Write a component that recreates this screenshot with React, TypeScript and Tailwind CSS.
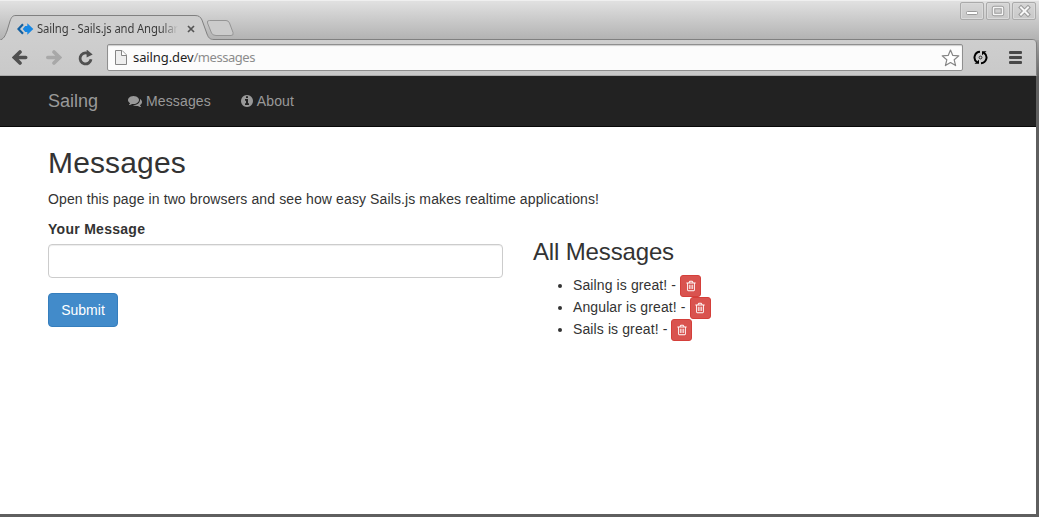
import React from "react";

type Glyph = { d: string; className?: string; viewBox?: string };

const COMMENTS =
  "M1408 768q0 139-94 257t-256.5 186.5-353.5 68.5q-86 0-176-16-124 88-278 128-36 9-86 16h-3q-11 0-20.5-8t-11.5-21q-1-3-1-6.5t.5-6.5 2-6l2.5-5 3.5-5.5 4-5 4.5-5 4-4.5q5-6 23-25t26-29.5 22.5-29 25-38.5 20.5-44q-124-72-195-177t-71-224q0-139 94-257t256.5-186.5 353.5-68.5 353.5 68.5 256.5 186.5 94 257zm384 256q0 120-71 224.5t-195 176.5q10 24 20.5 44t25 38.5 22.5 29 26 29.5 23 25q1 1 4 4.5t4.5 5 4 5 3.5 5.5l2.5 5 2 6 .5 6.5-1 6.5q-3 14-13 22t-22 7q-50-7-86-16-154-40-278-128-90 16-176 16-271 0-472-132 58 4 88 4 161 0 309-45t264-129q125-92 192-212t67-254q0-77-23-152 129 71 204 178t75 230z";
const INFO =
  "M1152 1376v-160q0-14-9-23t-23-9h-96v-512q0-14-9-23t-23-9h-320q-14 0-23 9t-9 23v160q0 14 9 23t23 9h96v320h-96q-14 0-23 9t-9 23v160q0 14 9 23t23 9h448q14 0 23-9t9-23zm-128-896v-160q0-14-9-23t-23-9h-192q-14 0-23 9t-9 23v160q0 14 9 23t23 9h192q14 0 23-9t9-23zm640 416q0 209-103 385.5t-279.5 279.5-385.5 103-385.5-103-279.5-279.5-103-385.5 103-385.5 279.5-279.5 385.5-103 385.5 103 279.5 279.5 103 385.5z";
const TRASH =
  "M704 736v576q0 14-9 23t-23 9h-64q-14 0-23-9t-9-23v-576q0-14 9-23t23-9h64q14 0 23 9t9 23zm256 0v576q0 14-9 23t-23 9h-64q-14 0-23-9t-9-23v-576q0-14 9-23t23-9h64q14 0 23 9t9 23zm256 0v576q0 14-9 23t-23 9h-64q-14 0-23-9t-9-23v-576q0-14 9-23t23-9h64q14 0 23 9t9 23zm128 724v-948h-896v948q0 22 7 40.5t14.5 27 10.5 8.5h832q3 0 10.5-8.5t14.5-27 7-40.5zm-672-1076h448l-48-117q-7-9-17-11h-317q-10 2-17 11zm928 32v64q0 14-9 23t-23 9h-96v948q0 83-47 143.5t-113 60.5h-832q-66 0-113-58.5t-47-141.5v-952h-96q-14 0-23-9t-9-23v-64q0-14 9-23t23-9h309l70-167q15-37 54-63t79-26h320q40 0 79 26t54 63l70 167h309q14 0 23 9t9 23z";

function Icon({ d, className, viewBox = "0 0 1792 1792" }: Glyph) {
  return (
    <svg viewBox={viewBox} fill="currentColor" className={className} aria-hidden="true">
      <path d={d} />
    </svg>
  );
}

function WindowButton({ children }: { children: React.ReactNode }) {
  return (
    <div className="flex h-[18px] w-6 items-center justify-center rounded-[2px] border border-[#aaa] bg-linear-to-b from-[#d6d6d6] to-[#c8c8c8] shadow-[inset_0_0_0_1px_#dadada]">
      <svg viewBox="0 0 22 16" className="h-4 w-[22px] shrink-0" fill="none">
        {children}
      </svg>
    </div>
  );
}

function TitleBar() {
  return (
    <div className="relative flex h-10 bg-linear-to-b from-[#e2e2e2] to-[#b2b2b2]">
      <svg viewBox="0 0 1039 40" className="absolute inset-0 h-10 w-[1039px]" fill="none">
        <path d="M0 .5H1039" stroke="#efefef" />
        <path
          d="M-1 40.5C4 39 5 36 7 31L10 21C11.500 17 12.500 15.500 16 15.500H195C199 15.500 200.500 17 202 20L207 34C208.500 38 210 39.500 214 39.500H1032Q1036 39.500 1036.500 42H-1Z"
          fill="#cecece"
          stroke="#808080"
        />
        <path
          d="M209.500 20.500H226Q228.500 20.500 229.500 23L233 32.500Q234 35.500 231 35.500H216Q212.500 35.500 211.500 33L207.500 23Q206.500 20.500 209.500 20.500Z"
          fill="#cbcbcb"
          stroke="#959595"
        />
      </svg>
      <div className="relative mt-[17px] flex h-6 w-[184px] items-center self-start pl-[17px]">
        <svg viewBox="0 0 17 12" className="h-3 w-[17px] shrink-0">
          <path d="M6 1.300 1.500 6 6 10.700" fill="none" stroke="#1560a0" strokeWidth="2.200" />
          <path d="M10.300 0.300 16.300 6 10.300 11.700V9H8.200L5.700 6 8.200 3H10.300Z" fill="#1788e4" />
        </svg>
        <span className="ml-[3px] shrink-0 origin-left scale-x-[0.94] whitespace-nowrap bg-linear-to-r from-[#383838] from-88% to-[#cecece] bg-clip-text font-['Noto_Sans',sans-serif] text-[12px] leading-[18px] tracking-[-0.14px] text-transparent">
          Sailng - Sails.js and Angular
        </span>
      </div>
      <svg viewBox="0 0 8 8" className="relative mt-[25px] ml-[3px] h-2 w-2" stroke="#555" strokeWidth="1.700">
        <path d="m1 1 6 6M7 1 1 7" />
      </svg>
      <div className="relative mt-[2px] mr-[3px] ml-auto flex gap-[2px]">
        <WindowButton>
          <rect x="5.500" y="8.500" width="11" height="3" rx="1" fill="#fff" stroke="#999" />
        </WindowButton>
        <WindowButton>
          <rect x="6.500" y="4.500" width="9" height="7" rx="1" stroke="#999" strokeWidth="3.400" />
          <rect x="6.500" y="4.500" width="9" height="7" rx="0.500" stroke="#f5f5f5" strokeWidth="1.500" />
        </WindowButton>
        <WindowButton>
          <path d="m8 4.500 7 7M15 4.500l-7 7" stroke="#999" strokeWidth="4" strokeLinecap="square" />
          <path d="m8 4.500 7 7M15 4.500l-7 7" stroke="#f7f7f7" strokeWidth="2" strokeLinecap="square" />
        </WindowButton>
      </div>
    </div>
  );
}

function Toolbar() {
  return (
    <div className="flex h-9 bg-linear-to-b from-[#a5a5a5] to-[#666] pr-[2px]">
      <div className="flex flex-1 items-center rounded-tr-[4px] border-r border-b border-r-[#808080] border-b-[#aaa] bg-linear-to-b from-[#cecece] to-[#c9c9c9] pl-3">
        <svg
          viewBox="0 0 16 16"
          className="h-4 w-4"
          fill="none"
          stroke="#505050"
          strokeWidth="3.600"
          strokeLinecap="round"
        >
          <path d="M13.700 7.500H4M8 2 2.400 7.500 8 13" />
        </svg>
        <svg
          viewBox="0 0 16 16"
          className="ml-[18px] h-4 w-4"
          fill="none"
          stroke="#a8a8a8"
          strokeWidth="3.600"
          strokeLinecap="round"
        >
          <path d="M1.800 7.500H12M8 2l5.600 5.500L8 13" />
        </svg>
        <svg viewBox="0 0 16 16" className="ml-4 h-4 w-4" fill="none">
          <path d="M13 9.300A5.500 5.500 0 1 1 9.500 3.300" stroke="#505050" strokeWidth="2.800" />
          <path d="M8.600 -0.500 14.700 4.500 8.600 7.500Z" fill="#505050" />
        </svg>
        <div className="ml-[13px] flex h-[27px] w-[856px] items-center rounded-[2px] border border-[#8f8f8f] bg-[#fcfcfc] pr-[2px] pl-[7px] font-['Noto_Sans',sans-serif] text-[13px] shadow-[inset_0_1px_1px_#ccc]">
          <svg viewBox="0 0 12 15" className="h-[15px] w-3" fill="#eee" stroke="#858585">
            <path d="M.500.500H7L11.500 5V14.500H.500Z" />
            <path d="M6.500.500V5.500H11.500" fill="#fff" />
          </svg>
          <span className="relative -top-px ml-[6px] tracking-[-0.1px] text-[#1f1f1f]">
            sailng.dev<span className="tracking-[-0.45px] text-[#8c8c8c]">/messages</span>
          </span>
          <svg viewBox="0 0 19 18" className="ml-auto h-[18px] w-[19px]" fill="#fff" stroke="#858585" strokeWidth="1.200">
            <path
              strokeLinejoin="round"
              d="m9.500 1 2.300 5.400 6 .5-4.600 3.900 1.400 5.800-5.100-3.100-5.100 3.100 1.400-5.800-4.600-3.900 6-.5Z"
            />
          </svg>
        </div>
        <svg viewBox="0 0 15 16" className="ml-[10px] h-4 w-[15px]" fill="none">
          <path
            d="M7 1.800A5.700 5.700 0 0 0 4 12.200M8 13.200A5.700 5.700 0 0 0 11 2.800"
            stroke="#000"
            strokeWidth="2"
          />
          <path d="M1.500 13.800H6V9.800ZM13.500 1.200H9V5.200Z" fill="#000" />
          <circle cx="7.500" cy="7.500" r="1.400" stroke="#222" strokeWidth="0.900" />
        </svg>
        <svg viewBox="0 0 13 13" className="ml-[21px] h-[13px] w-[13px]" fill="#484848">
          <rect width="13" height="3" rx="1" />
          <rect y="5" width="13" height="3" rx="1" />
          <rect y="10" width="13" height="3" rx="1" />
        </svg>
      </div>
    </div>
  );
}

const messages = ["Sailng is great!", "Angular is great!", "Sails is great!"];

export default function App() {
  return (
    <div className="flex h-[517px] w-[1039px] flex-col overflow-hidden bg-[#ccc] font-['Liberation_Sans',Arial,sans-serif] text-sm leading-5 text-[#333]">
      <TitleBar />
      <Toolbar />
      <div className="flex flex-1 flex-col border-r-3 border-b-3 border-[#5f5f5f] bg-white">
        <nav className="flex h-[51px] items-center border-b border-[#080808] bg-[#222] pl-12 text-[#999]">
          <a className="text-lg leading-5">Sailng</a>
          <a className="ml-[30px] flex items-center tracking-[0.12px]">
            <Icon d={COMMENTS} className="mr-1 h-[14px] w-[14px]" />
            Messages
          </a>
          <a className="ml-[30px] flex items-center tracking-[0.12px]">
            <Icon d={INFO} viewBox="128 0 1536 1792" className="mr-1 h-[14px] w-3" />
            About
          </a>
        </nav>
        <main className="px-12 pt-[19px]">
          <h1 className="text-[30px] leading-[33px] tracking-[0.15px]">Messages</h1>
          <p className="mt-[10px] tracking-[0.112px]">
            Open this page in two browsers and see how easy Sails.js makes realtime applications!
          </p>
          <div className="mt-[10px] grid grid-cols-[455px_1fr] gap-[30px]">
            <form>
              <label htmlFor="message" className="block font-bold tracking-[0.28px]">
                Your Message
              </label>
              <input
                id="message"
                className="mt-[5px] block h-[34px] w-full rounded-sm border border-[#ccc] bg-white px-3 shadow-[inset_0_1px_1px_rgba(0,0,0,0.075)]"
              />
              <button
                type="button"
                className="mt-[15px] h-[34px] w-[70px] rounded-sm border border-[#357ebd] bg-[#428bca] text-white"
              >
                Submit
              </button>
            </form>
            <section className="pt-5">
              <h2 className="text-2xl leading-[26px] tracking-[-0.15px]">All Messages</h2>
              <ul className="mt-[10px] list-disc pl-10 tracking-[0.11px]">
                {messages.map((message) => (
                  <li key={message} className="h-[22px] leading-5">
                    <span>{message} - </span>
                    <button
                      type="button"
                      aria-label="Delete"
                      className="inline-flex h-[22px] w-[21px] items-center justify-center rounded-[3px] border border-[#d43f3a] bg-[#d9534f] align-top text-white"
                    >
                      <Icon d={TRASH} className="h-3 w-3" />
                    </button>
                  </li>
                ))}
              </ul>
            </section>
          </div>
        </main>
      </div>
    </div>
  );
}
